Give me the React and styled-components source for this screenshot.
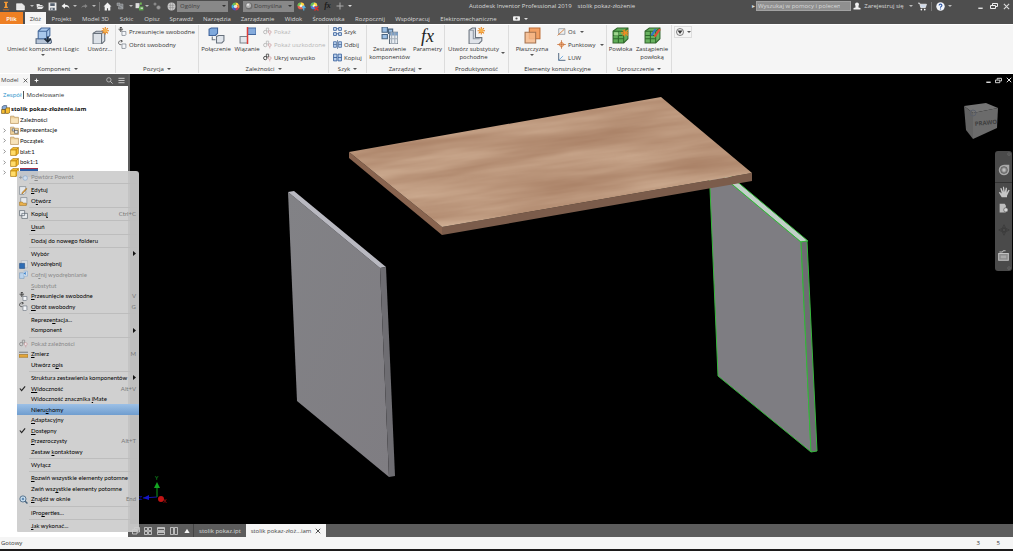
import React from 'react';
import styled, { createGlobalStyle, css } from 'styled-components';

const Global = createGlobalStyle`
  *, *::before, *::after { box-sizing: border-box; }
  html, body, #root { height: 100%; }
  body { margin: 0; background: #000; overflow: hidden; }
  button, input, select { font: inherit; color: inherit; margin: 0; padding: 0; border: 0; background: none; border-radius: 0; }
  svg { display: block; flex: none; }
`;

const uiFont = '"Open Sans", "Noto Sans", sans-serif';
const menuFont = 'Lato, "Liberation Sans", sans-serif';

/* ---------- icons ---------- */

const art = {
  logo: <><path d="M5 1h6v2H9.500v6H11v2H5V9h1.500V3H5z" fill="#f59a35" /><path d="M3 13h10v2H3z" fill="#a9662a" /></>,
  fresh: <path d="M1 3h10l4 4v7H1z" fill="#e8e8e8" stroke="#fff" />,
  open: <path d="M1 4h6l1 2h5v2H5l-3 5zM5 9h11l-4 5H2z" fill="#e6e6e6" />,
  save: <><path d="M1 1h14v14H1z" fill="#ececec" /><path d="M4 2h8v5H4zM4 10h8v5H4z" fill="#55606e" /><path d="M6 11h2v3H6z" fill="#fff" /></>,
  undo: <path d="M7 2 1 7l6 5V9c4-1 6 0 8 3 0-5-3-7-8-7z" fill="#f2f2f2" />,
  redo: <path d="m9 2 6 5-6 5V9c-4-1-6 0-8 3 0-5 3-7 8-7z" fill="#858585" />,
  home: <path d="M8 1 1 8h2v7h4v-4h2v4h4V8h2z" fill="#f0f0f0" />,
  sheet: <><path d="M2 2h6v5H2zM9 4h5v10H5V9" fill="#7e8286" stroke="#b5b5b5" /><path d="m9 8 4 4" stroke="#ddd" /></>,
  update: <><path d="M1 2h7v9H1z" fill="#dedede" /><path d="M7 8h8v7H7z" fill="#5ea94e" /><path d="M9 1h3v4H9z" fill="#73bf56" /><path d="M10 10h4v2h-4z" fill="#eee" /></>,
  link: <><circle cx="4" cy="4" r="3" fill="#888" /><circle cx="11" cy="11" r="4" fill="#999" stroke="#666" /></>,
  ball: <><circle cx="8" cy="8" r="7" fill="#c9c9c9" /><path d="M3 6h10M3 10h10M6 2v12M10 2v12" stroke="#8d8d8d" /></>,
  sphere: <><circle cx="8" cy="8" r="7" fill="#6f6f6f" /><circle cx="7" cy="7" r="5" fill="#b5b5b5" /><circle cx="6" cy="5.500" r="2" fill="#eee" /></>,
  wheel: <><path d="M8 8V1a7 7 0 0 1 6 3.500z" fill="#ffd83e" /><path d="m8 8 6-3.500a7 7 0 0 1 0 7z" fill="#f2883c" /><path d="m8 8 6 3.500A7 7 0 0 1 8 15z" fill="#cf3b58" /><path d="M8 8v7a7 7 0 0 1-6-3.500z" fill="#4557c9" /><path d="m8 8-6 3.500a7 7 0 0 1 0-7z" fill="#3daee0" /><path d="M8 8 2 4.500A7 7 0 0 1 8 1z" fill="#6ac254" /><circle cx="8" cy="8" r="3" fill="#fff" opacity=".75" /></>,
  wheelUp: <><circle cx="7" cy="7" r="6" fill="#e5604a" /><path d="M1 7a6 6 0 0 1 6-6v6z" fill="#6ac254" /><path d="M7 1a6 6 0 0 1 6 6H7z" fill="#ffd83e" /><circle cx="7" cy="7" r="2.500" fill="#fff" opacity=".8" /><path d="M12 7v8M9 11l3-4 3 4" fill="none" stroke="#55b7ee" strokeWidth="2" /></>,
  wheelOff: <><circle cx="7" cy="7" r="6" fill="#4d7fd2" /><path d="M1 7a6 6 0 0 1 6-6v6z" fill="#6ac254" /><path d="M7 1a6 6 0 0 1 6 6H7z" fill="#ffd83e" /><circle cx="7" cy="7" r="2.500" fill="#fff" opacity=".8" /><path d="m8 8 7 7M15 8l-7 7" stroke="#e02f2f" strokeWidth="2.500" /></>,
  plus: <path d="M8 1v14M1 8h14" stroke="#aaa" strokeWidth="2" />,
  user: <><circle cx="8" cy="5" r="4" fill="#f0f0f0" /><path d="M5 8h6v3l4 1v3H1v-3l4-1z" fill="#f0f0f0" /></>,
  cart: <><path d="M0 2h3l2 8h8l2-6H4" fill="#cdd9ea" stroke="#e8e8e8" strokeWidth="1.500" /><circle cx="6" cy="13.500" r="1.500" fill="#fff" /><circle cx="12" cy="13.500" r="1.500" fill="#fff" /></>,
  help: <><circle cx="8" cy="8" r="7.500" fill="#f4f7fc" /><path d="M5.500 6C5.500 3 10.500 3 10.500 6c0 2-2.500 2-2.500 4M8 11.500v2" fill="none" stroke="#3159a5" strokeWidth="2" /></>,
  minimize: <path d="M3 12h10" stroke="#eee" strokeWidth="3" />,
  restore: <path d="M5 6V3h10v6h-3M1 7h10v6H1z" fill="none" stroke="#eee" strokeWidth="2" />,
  close: <path d="m2 2 12 12M14 2 2 14" stroke="currentColor" strokeWidth="2.500" />,
  addBar: <path d="M8 2v12M2 8h12" stroke="#fff" strokeWidth="3" />,
  search: <><circle cx="6.500" cy="6.500" r="5" fill="none" stroke="#d0d0d0" strokeWidth="1.600" /><path d="m10 10 5 5" stroke="#d0d0d0" strokeWidth="2" /></>,
  lines: <path d="M1 3h14M1 8h14M1 13h14" stroke="#e4e4e4" strokeWidth="1.800" />,
  twist: <path d="m5 2 6 6-6 6" fill="none" stroke="#777" strokeWidth="2.500" />,
  place: <><path d="M1 11h13l2 3-2 2H1z" fill="#b7c5d8" stroke="#53657c" /><path d="M3 4l3-3h8v7l-3 3H3z" fill="#a9c8ec" stroke="#46699b" /><path d="M3 4h8v7M11 4l3-3" fill="none" stroke="#46699b" /><path d="M12 9v5m-3-3 3 3 3-3" fill="none" stroke="#1f2c3c" strokeWidth="1.600" /></>,
  create: <><path d="M1 6l3-2h8v9l-3 3H1z" fill="#dde2e8" stroke="#69727c" /><path d="M1 6h8v10M9 6l3-2" fill="none" stroke="#69727c" /><path d="M12.500 0v7M9 3.500h7M10 1l5 5M15 1l-5 5" stroke="#e5801c" /><circle cx="12.500" cy="3.500" r="2" fill="#f7b24e" /></>,
  move: <><path d="M5 0v8M1 4h8M3 2l2-2 2 2M3 6l2 2 2-2" fill="none" stroke="#333" strokeWidth="1.400" /><path d="M7 8h7v6l-1 1H7z" fill="#f5f7fa" stroke="#56616d" /></>,
  rotate: <><path d="M7 2C3 0 1 3 1 5s2 4 5 3M5 0l3 2-3 2" fill="none" stroke="#333" strokeWidth="1.300" /><path d="M7 7h7v7l-1 1H7z" fill="#f5f7fa" stroke="#56616d" /></>,
  joint: <><path d="M1 2l2-1h6v5L7 8H1z" fill="#7ea8dc" stroke="#3e639b" /><path d="M8 9l2-1h5v5l-2 2H8z" fill="#e1e6ec" stroke="#67717c" /><path d="M4 9v3h3" fill="none" stroke="#68737f" strokeWidth="1" /></>,
  constrain: <><path d="M8 1h8v6H8z" fill="#85abdc" stroke="#42689f" /><path d="M1 9h7v6H1z" fill="#e3e7ec" stroke="#7b838c" /><path d="M8 0v16" stroke="#df3c36" strokeWidth="1.400" /></>,
  relation: <><circle cx="4" cy="9" r="3" fill="none" stroke="currentColor" strokeWidth="1.500" /><path d="M6 2h4v5H6z" fill="none" stroke="currentColor" strokeWidth="1.300" /><circle cx="12" cy="9" r="2.500" fill="#eee" stroke="#c78b91" /><path d="M12 12v3" stroke="#c78b91" /></>,
  pattern: <g fill="#d7e5f5" stroke="#365f9b" strokeWidth="1.500"><path d="M1 1h5v5H1zM10 1h5v5h-5zM1 10h5v5H1zM10 10h5v5h-5z" /><path d="M6 3h4M6 12h4" /></g>,
  mirror: <><path d="M1 3h5v10H1zM10 3h5v10h-5z" fill="#bdd3ef" stroke="#365f9b" strokeWidth="1.300" /><path d="M8 0v16M1 8h5M10 8h5" stroke="#244878" /></>,
  copy: <path d="M1 2h6v12H1zM9 2h6v12H9zM1 8h6M9 8h6" fill="#bdd3ef" stroke="#365f9b" strokeWidth="1.500" />,
  bom: <><path d="M1 0h5v5H1zM1 7h5v4H1zM7 2h4v4H7z" fill="#9dc0e5" stroke="#4a6581" /><path d="M8 5h8v11H8z" fill="#e8edf2" stroke="#5f6d7b" /><path d="M8 5h8v3H8z" fill="#7d9fc4" /><path d="M10 5v11M13 5v11M8 11h8" stroke="#a3aeb9" /></>,
  substitute: <><path d="M1 3l3-2h3v9h6v3l-3 3H1z" fill="#dfe3e9" stroke="#69727c" /><path d="M1 3h4v8h6" fill="none" stroke="#8f98a2" /><path d="M12.500 0v7M9 3.500h7M10 1l5 5M15 1l-5 5" stroke="#e5801c" /><circle cx="12.500" cy="3.500" r="2" fill="#f7b24e" /></>,
  plane: <><path d="M5 1h10v10H5z" fill="#f2a064" stroke="#bd6a32" /><path d="M1 5h10v10H1z" fill="#f6b98a" fillOpacity=".85" stroke="#a3714e" /></>,
  axis: <><path d="M3 3h11v10H3z" fill="#eef0f2" stroke="#69727c" /><path d="M1 15 13 4" stroke="#d9772c" strokeWidth="1.500" /></>,
  point: <><path d="m8 2 6 6-6 6-6-6z" fill="#e59a64" /><path d="m8 5 3 3-3 3-3-3z" fill="#f8d2b2" /><path d="M8 0v16M0 8h16" stroke="#b9622c" /></>,
  ucs: <><path d="M3 0v13h12" fill="none" stroke="#39536f" strokeWidth="1.500" /><path d="m3 13 8-8" stroke="#3a8ad4" strokeWidth="1.500" strokeDasharray="2 1" /></>,
  shrink: <><path d="M1 4l4-3h10v10l-4 4H1z" fill="#5fae58" stroke="#34672f" /><path d="M1 4h10v11M11 4l4-3M1 8h10M6 4v11M1 11h10" fill="none" stroke="#2d6a2a" /><path d="M2 5h4v3H2z" fill="#a0d68f" /><path d="M12 2v7M8.500 5.500h7M10 3l5 5M15 3l-5 5" stroke="#ef8c22" /></>,
  replace: <><path d="M1 4l4-3h10v10l-4 4H1z" fill="#68b25f" stroke="#34672f" /><path d="M1 4h10v11M11 4l4-3M1 8h10M6 4v11M1 11h10" fill="none" stroke="#2d6a2a" /><path d="m7 8 4-6" stroke="#3475c6" strokeWidth="2" /><path d="m10 9 5-7" stroke="#e24c35" strokeWidth="2" /></>,
  show: <><circle cx="8" cy="8" r="7" fill="#f3f3f3" stroke="#555" strokeWidth="1.500" /><path d="M3 5h10l-5 7z" fill="#333" /></>,
  folder: <><path d="M1 2h6l1 2h7v11H1z" fill="#edcf98" stroke="#a98145" /><path d="M2 6h12v8H2z" fill="#f7e3ba" /></>,
  views: <><path d="M1 2h6l1 2h7v11H1z" fill="#edcf98" stroke="#a98145" /><path d="M4 5h4v4H4zM8 8h6v5H8z" fill="#e8ecf0" stroke="#3c434b" /></>,
  part: <><path d="m1 5 4-4h10v10l-4 4H1z" fill="#f9bf2a" stroke="#9a6a07" /><path d="M2 6h8v8H2z" fill="#ffdc6a" /><path d="M1 5h10v10M11 5l4-4" fill="none" stroke="#9a6a07" /></>,
  assembly: <><path d="M2 3l3-2h5v5L8 8H2z" fill="#87abda" stroke="#253a56" /><path d="M1 8h6v7H1zM8 7l2-2h6v8l-3 2H8z" fill="#f6bd33" stroke="#573d0b" /></>,
  mRepeat: <><path d="M0 8h6M3 5v6" stroke="#8f979f" strokeWidth="1.500" /><circle cx="11" cy="9" r="4" fill="#cfdcea" stroke="#7ba0cc" /></>,
  mEdit: <><path d="M1 1h11v11l-3 3H1z" fill="#e6e9ed" stroke="#69727c" /><path d="m14 5-7 8-2 1 1-3 7-7z" fill="#e8a33c" stroke="#9a6518" /></>,
  mOpen: <><path d="M3 1h11v12H3z" fill="#e6e9ed" stroke="#69727c" /><path d="M1 9h5l1 2h6v4H1z" fill="#ecb34e" stroke="#a1701c" /></>,
  mCopy: <path d="M1 1h9v9H1zM5 6h10v9H5z" fill="#eceff2" stroke="#57616c" strokeWidth="1.200" />,
  mIsolate: <><path d="M4 1h11v13H4z" fill="#d9dde2" stroke="#a8afb7" /><path d="M1 6h9v9H1z" fill="#2e6db5" stroke="#1d4a80" /></>,
  mUndo: <><path d="M1 5h8v10H1z" fill="#b9d2ec" stroke="#7597bc" /><path d="M8 2h7v9H9" fill="#d7e1ec" stroke="#7fa5cf" /><path d="m8 6 4-3v6z" fill="#3b82cc" /></>,
  mMeasure: <><path d="M0 4h16" stroke="#7f8489" strokeWidth="2" /><path d="M0 8h16v5H0z" fill="#e5a83a" stroke="#94671b" /></>,
  mCheck: <path d="m2 8 4 5L14 3" fill="none" stroke="#222" strokeWidth="2.600" />,
  mFind: <><circle cx="7" cy="7" r="5.500" fill="#c9dff0" stroke="#45617c" strokeWidth="1.500" /><path d="m11 11 4 4" stroke="#45617c" strokeWidth="2.500" /><path d="M5 5h4v4H5z" fill="#648db5" /></>,
  tCascade: <path d="M1 5h9v9H1zM5 5V1h10v9h-5" fill="none" stroke="#ddd" strokeWidth="1.500" />,
  tGrid: <path d="M1 1h6v6H1zM9 1h6v6H9zM1 9h6v6H1zM9 9h6v6H9z" fill="none" stroke="#ddd" strokeWidth="1.500" />,
  tRows: <path d="M1 1h14v6H1zM1 9h14v6H1zM1 3h14M1 11h14" fill="none" stroke="#ddd" strokeWidth="1.500" />,
  tCols: <path d="M1 1h6v14H1zM9 1h6v14H9z" fill="none" stroke="#ddd" strokeWidth="1.500" />,
  tUp: <path d="m8 2 7 11H1z" fill="#f4f4f4" />,
  navWheel: <><path d="M8 1h7v7a7 7 0 1 1-7-7z" fill="#a9a9a9" /><circle cx="8" cy="8" r="4.500" fill="#8b8b8b" stroke="#555" /><circle cx="8" cy="8" r="2.200" fill="#bdbdbd" /></>,
  navPan: <path d="M5 15 1 8.500 2.500 8 5 10 3 3l1.500-.5L7 8 6.500 1H8l1 7 1.500-6 1.500.500L11.500 9 14 5l1.500.500L12 13v2z" fill="#c6c6c6" />,
  navZoom: <><path d="M1 1h8l2 3v11H1z" fill="#bdbdbd" /><circle cx="11" cy="11" r="3.500" fill="#d5d5d5" stroke="#4b4b4b" /></>,
  navOrbit: <path d="M8 1 6 5h4zM8 15l-2-4h4zM1 8l4-2v4zM15 8l-4-2v4zM6 6h4v4H6z" fill="none" stroke="#393939" />,
  navLook: <><path d="M1 5h14v10H1z" fill="#8c8c8c" stroke="#c2c2c2" strokeWidth="1.500" /><path d="M2 3h4l2-2h3" fill="none" stroke="#bdbdbd" strokeWidth="1.500" /><path d="M4 8h8v4H4z" fill="#a9a9a9" /></>,
  dot: <><circle cx="8" cy="8" r="6" fill="#777" /><path d="m5 5 6 6M11 5l-6 6" stroke="#222" strokeWidth="2" /></>,
  camera: <><rect x="0" y="3" width="16" height="10" rx="2" fill="#f0f0f0" /><circle cx="8" cy="8" r="2.500" fill="#555" /></>,
};

const Icon = ({ name, size = 8 }) => (
  <svg width={size} height={size} viewBox="0 0 16 16" aria-hidden="true">{art[name]}</svg>
);

const Caret = ({ color = '#555' }) => (
  <svg width="4" height="2" viewBox="0 0 4 2" aria-hidden="true"><path d="M0 0h4L2 2z" fill={color} /></svg>
);

/* ---------- title bar ---------- */

const Page = styled.div`
  position: relative;
  display: flex;
  flex-direction: column;
  height: 100%;
  background: #f5f5f5;
  color: #333;
  font: 6px/8px ${uiFont};
`;

const TitleBar = styled.header`
  display: flex;
  align-items: center;
  height: 12px;
  background: #4e4e4e;
  color: #dadada;
`;

const Tool = styled.button`
  display: flex;
  align-items: center;
  justify-content: center;
  width: ${p => p.$w}px;
  height: 12px;
  white-space: nowrap;
  ${p => p.$serif && css`font: italic bold 8px/12px "Liberation Serif", serif; color: #1a1a1a;`}
`;

const Divider = styled.span`
  width: 1px;
  height: 9px;
  margin: 0 3px;
  background: #777;
`;

const Picker = styled.label`
  display: flex;
  align-items: center;
  width: 51px;
  height: 11px;
  padding: 0 2px;
  background: #888;
  color: #3f3f3f;
`;

const Select = styled.select`
  flex: 1;
  min-width: 0;
  appearance: none;
  height: 10px;
  padding-left: 1px;
  outline: 0;
`;

const Title = styled.h1`
  display: flex;
  flex: 1;
  justify-content: center;
  gap: 6px;
  margin: 0;
  font-size: 6px;
  font-weight: 400;
  white-space: nowrap;
`;

const Search = styled.input`
  width: 95px;
  height: 10px;
  padding: 0 1px;
  border: 1px solid #a2a2a2;
  background: #8f8f8f;
  &::placeholder { color: #d8d8d8; opacity: 1; }
`;

const WindowButtons = styled.div`
  display: flex;
  margin-left: 20px;
`;

const quickTools = [
  ['logo', 11, 10, 'Menu programu'], ['fresh', 19, 9, 'Nowy'], ['caret', 4, 0, 'Szablony'], ['open', 12, 8, 'Otwórz'],
  ['save', 13, 9, 'Zapisz'], ['undo', 13, 9, 'Cofnij'], ['caret', 6, 0, 'Historia cofania'], ['redo', 13, 7, 'Ponów'],
  ['caret', 5, 0, 'Historia ponowień'], null, ['home', 9, 9, 'Strona główna'], ['sheet', 16, 8, 'Arkusz'],
  ['caret', 5, 0, 'Opcje arkusza'], ['update', 12, 9, 'Aktualizuj'], ['caret', 4, 0, 'Opcje aktualizacji'],
  ['link', 16, 8, 'Łącza'], ['ball', 12, 9, 'Materiał'],
];

function AppBar() {
  return (
    <TitleBar>
      {quickTools.map((t, i) => t
        ? <Tool key={i} $w={t[1]} aria-label={t[3]}>{t[0] === 'caret' ? <Caret color="#bbb" /> : <Icon name={t[0]} size={t[2]} />}</Tool>
        : <Divider key={i} />)}
      <Picker><Select aria-label="Materiał"><option>Ogólny</option></Select><Caret color="#333" /></Picker>
      <Tool $w={15} aria-label="Kolory"><Icon name="wheel" size={9} /></Tool>
      <Picker><Icon name="sphere" /><Select aria-label="Wygląd"><option>Domyślna</option></Select><Caret color="#333" /></Picker>
      <Tool $w={14} aria-label="Dopasuj"><Icon name="wheelUp" size={9} /></Tool>
      <Tool $w={13} aria-label="Wyczyść"><Icon name="wheelOff" size={9} /></Tool>
      <Tool $w={13} $serif aria-label="Parametry">fx</Tool>
      <Tool $w={12} aria-label="Dodaj"><Icon name="plus" /></Tool>
      <Tool $w={8} aria-label="Dostosuj"><Caret color="#ddd" /></Tool>
      <Title><span>Autodesk Inventor Professional 2019</span><span>stolik pokaz-złożenie</span></Title>
      <Tool $w={6} aria-label="Zwiń wyszukiwanie">▸</Tool>
      <Search type="search" aria-label="Wyszukaj" placeholder="Wyszukaj w pomocy i polecenia" />
      <Tool $w={12} aria-label="Konto"><Icon name="user" /></Tool>
      <Tool $w={42}>Zarejestruj się</Tool>
      <Tool $w={12} aria-label="Opcje konta"><Caret color="#bbb" /></Tool>
      <Tool $w={11} aria-label="Sklep"><Icon name="cart" size={9} /></Tool>
      <Divider />
      <Tool $w={11} aria-label="Pomoc"><Icon name="help" size={9} /></Tool>
      <Tool $w={8} aria-label="Opcje pomocy"><Caret color="#bbb" /></Tool>
      <WindowButtons>
        <Tool $w={13} aria-label="Minimalizuj"><Icon name="minimize" size={7} /></Tool>
        <Tool $w={13} aria-label="Przywróć"><Icon name="restore" size={8} /></Tool>
        <Tool $w={13} aria-label="Zamknij"><Icon name="close" size={7} /></Tool>
      </WindowButtons>
    </TitleBar>
  );
}

/* ---------- ribbon ---------- */

const RibbonTabs = styled.nav`
  display: flex;
  height: 12px;
  background: #4e4e4e;
`;

const RibbonTab = styled.button`
  display: flex;
  align-items: center;
  justify-content: center;
  gap: 4px;
  width: ${p => p.$w}px;
  height: 12px;
  padding-top: 1px;
  white-space: nowrap;
  color: #d8d8d8;
  ${p => p.$kind === 'file' && css`margin-right: 2px; background: #ee8024; color: #fff; font-weight: 600;`}
  ${p => p.$kind === 'active' && css`background: #f5f5f5; color: #444;`}
`;

const tabs = [
  ['Plik', 23, 'file'], ['Złóż', 21, 'active'], ['Projekt', 31], ['Model 3D', 37], ['Szkic', 25], ['Opisz', 26],
  ['Sprawdź', 33], ['Narzędzia', 38], ['Zarządzanie', 43], ['Widok', 29], ['Środowiska', 41], ['Rozpocznij', 42],
  ['Współpracuj', 43], ['Elektromechaniczne', 69],
];

const RibbonBody = styled.section`
  display: flex;
  height: 50px;
  border-top: 1px solid #fff;
  border-bottom: 1px solid #fff;
  background: #f5f5f5;
`;

const Group = styled.div`
  display: flex;
  flex-direction: column;
  width: ${p => p.$w}px;
  border-right: 1px solid #dcdcdc;
`;

const GroupTools = styled.div`
  display: flex;
  flex: 1;
`;

const GroupLabel = styled.button`
  display: flex;
  align-items: center;
  justify-content: center;
  gap: 3px;
  height: 9px;
  white-space: nowrap;
`;

const BigButton = styled.button`
  display: flex;
  flex-direction: column;
  align-items: center;
  width: ${p => p.$w}px;
  padding-top: 2px;
  white-space: nowrap;
  text-align: center;
`;

const BigLabel = styled.span`
  display: flex;
  align-items: center;
  gap: 2px;
  margin: 1px 0;
`;

const Fx = styled.span`
  height: 17px;
  font: italic 18px/18px "Liberation Serif", serif;
  color: #222;
`;

const SmallList = styled.div`
  display: flex;
  flex-direction: column;
  padding-left: ${p => p.$pad}px;
`;

const SmallButton = styled.button`
  display: flex;
  align-items: center;
  gap: 2px;
  height: 13px;
  white-space: nowrap;
  color: ${p => (p.$off ? '#b5b5b5' : '#333')};
`;

const CaretSlot = styled.span`
  padding-left: 2px;
`;

const FoldButton = styled.button`
  display: flex;
  align-items: center;
  justify-content: center;
  gap: 3px;
  width: 18px;
  height: 12px;
  margin: 1px 2px;
  border: 1px solid #ddd;
`;

const Big = ({ icon, w, lines, below, side }) => (
  <BigButton $w={w}>
    {icon === 'fx' ? <Fx>fx</Fx> : <Icon name={icon} size={17} />}
    <BigLabel>
      <span>{lines.map((l, i) => <React.Fragment key={l}>{i > 0 && <br />}{l}</React.Fragment>)}</span>
      {side && <Caret />}
    </BigLabel>
    {below && <Caret />}
  </BigButton>
);

const Small = ({ icon, children, off, caret }) => (
  <SmallButton $off={off} disabled={off}><Icon name={icon} size={9} />{children}{caret && <CaretSlot><Caret /></CaretSlot>}</SmallButton>
);

const RibbonGroup = ({ w, label, caret, children }) => (
  <Group $w={w}>
    <GroupTools>{children}</GroupTools>
    <GroupLabel>{label}{caret && <Caret />}</GroupLabel>
  </Group>
);

function Ribbon() {
  return (
    <>
      <RibbonTabs>
        {tabs.map(([name, w, kind]) => <RibbonTab key={name} $w={w} $kind={kind}>{name}</RibbonTab>)}
        <RibbonTab $w={34} aria-label="Nagrywanie"><Icon name="camera" size={7} /><Caret color="#ddd" /></RibbonTab>
      </RibbonTabs>
      <RibbonBody>
        <RibbonGroup w={116} label="Komponent" caret>
          <Big icon="place" w={86} lines={['Umieść komponent iLogic']} below />
          <Big icon="create" w={28} lines={['Utwórz...']} />
        </RibbonGroup>
        <RibbonGroup w={83} label="Pozycja" caret>
          <SmallList $pad={2}>
            <Small icon="move">Przesunięcie swobodne</Small>
            <Small icon="rotate">Obrót swobodny</Small>
          </SmallList>
        </RibbonGroup>
        <RibbonGroup w={130} label="Zależności" caret>
          <Big icon="joint" w={34} lines={['Połączenie']} />
          <Big icon="constrain" w={28} lines={['Wiązanie']} />
          <SmallList $pad={2}>
            <Small icon="relation" off>Pokaż</Small>
            <Small icon="relation" off>Pokaż uszkodzone</Small>
            <Small icon="relation">Ukryj wszystko</Small>
          </SmallList>
        </RibbonGroup>
        <RibbonGroup w={38} label="Szyk" caret>
          <SmallList $pad={4}>
            <Small icon="pattern">Szyk</Small>
            <Small icon="mirror">Odbij</Small>
            <Small icon="copy">Kopiuj</Small>
          </SmallList>
        </RibbonGroup>
        <RibbonGroup w={78} label="Zarządzaj" caret>
          <Big icon="bom" w={45} lines={['Zestawienie', 'komponentów']} />
          <Big icon="fx" w={31} lines={['Parametry']} />
        </RibbonGroup>
        <RibbonGroup w={64} label="Produktywność">
          <Big icon="substitute" w={63} lines={['Utwórz substytuty', 'pochodne']} side />
        </RibbonGroup>
        <RibbonGroup w={98} label="Elementy konstrukcyjne">
          <Big icon="plane" w={46} lines={['Płaszczyzna']} below />
          <SmallList $pad={2}>
            <Small icon="axis" caret>Oś</Small>
            <Small icon="point" caret>Punktowy</Small>
            <Small icon="ucs">LUW</Small>
          </SmallList>
        </RibbonGroup>
        <RibbonGroup w={65} label="Uproszczenie" caret>
          <Big icon="shrink" w={27} lines={['Powłoka']} />
          <Big icon="replace" w={36} lines={['Zastąpienie', 'powłoką']} />
        </RibbonGroup>
        <FoldButton aria-label="Panele wstążki"><Icon name="show" /><Caret /></FoldButton>
      </RibbonBody>
    </>
  );
}

/* ---------- model browser ---------- */

const Workspace = styled.main`
  display: flex;
  flex: 1;
  min-height: 0;
`;

const Browser = styled.aside`
  display: flex;
  flex-direction: column;
  width: 130px;
  border-right: 2px solid #5c5c5c;
  background: #fff;
`;

const BrowserTabs = styled.div`
  display: flex;
  align-items: center;
  height: 12px;
  background: #555;
`;

const BrowserTab = styled.button`
  display: flex;
  align-items: center;
  gap: 4px;
  width: 30px;
  height: 12px;
  padding-left: 1px;
  background: #f5f5f5;
  color: #444;
`;

const Spacer = styled.span`
  flex: 1;
`;

const Modes = styled.div`
  display: flex;
  align-items: center;
  gap: 2px;
  height: 18px;
  padding-left: 3px;
`;

const ModeLink = styled.a`
  color: ${p => (p.$on ? '#1b8fc9' : '#333')};
  text-decoration: none;
  ${p => !p.$on && css`padding-left: 2px; border-left: 1px solid #555;`}
`;

const Tree = styled.ul`
  display: grid;
  grid-template-rows: repeat(7, 1fr);
  height: 74px;
  margin: 0;
  padding: 0;
  list-style: none;
  color: #111;
`;

const TreeRow = styled.li`
  display: flex;
  align-items: center;
  gap: 1px;
  padding-left: ${p => (p.$root ? 1 : 2)}px;
  white-space: nowrap;
  ${p => (p.$root ? css`font-weight: 700;` : css`font-family: ${menuFont};`)}
`;

const Twist = styled.span`
  width: 7px;
`;

const Picked = styled.span`
  width: 18px;
  height: 9px;
  border-top: 1px solid #a03048;
  background: #2c5fa8;
`;

const tree = [[false, 'folder', 'Zależności'], [true, 'views', 'Reprezentacje'], [true, 'folder', 'Początek'], [true, 'part', 'blat:1'], [true, 'part', 'bok1:1']];

function ModelBrowser() {
  return (
    <Browser>
      <BrowserTabs>
        <BrowserTab>Model<Icon name="close" size={5} /></BrowserTab>
        <Tool $w={12} aria-label="Dodaj panel"><Icon name="addBar" size={5} /></Tool>
        <Spacer />
        <Tool $w={12} aria-label="Szukaj"><Icon name="search" size={7} /></Tool>
        <Tool $w={13} aria-label="Menu przeglądarki"><Icon name="lines" size={7} /></Tool>
      </BrowserTabs>
      <Modes><ModeLink href="#zespol" $on>Zespół</ModeLink><ModeLink href="#modelowanie">Modelowanie</ModeLink></Modes>
      <Tree>
        <TreeRow $root><Icon name="assembly" size={9} />stolik pokaz-złożenie.iam</TreeRow>
        {tree.map(([twist, icon, name]) => <TreeRow key={name}><Twist>{twist && <Icon name="twist" size={5} />}</Twist><Icon name={icon} size={9} />{name}</TreeRow>)}
        <TreeRow><Twist><Icon name="twist" size={5} /></Twist><Icon name="part" size={9} /><Picked /></TreeRow>
      </Tree>
    </Browser>
  );
}

/* ---------- context menu ---------- */

const Menu = styled.div`
  position: absolute;
  top: 171px;
  left: 17px;
  z-index: 2;
  display: flex;
  flex-direction: column;
  width: 122px;
  height: 361px;
  padding: 1px 0;
  border-radius: 1px 3px 3px 1px;
  background: rgba(204, 204, 204, 0.93);
  font-family: ${menuFont};
`;

const MenuItem = styled.button`
  display: flex;
  flex: 4 1 0;
  align-items: center;
  min-height: 0;
  padding: 0 3px 0 2px;
  text-align: left;
  white-space: nowrap;
  color: ${p => (p.$off ? '#8a8a8a' : '#000')};
  ${p => p.$hot && css`background: linear-gradient(#9cc0e6, #6f9dcf);`}
`;

const MenuIcon = styled.span`
  flex: none;
  width: 12px;
`;

const MenuText = styled.span`
  flex: 1;
`;

const Shortcut = styled.kbd`
  font: inherit;
  color: #777;
`;

const Rule = styled.hr`
  flex: 1 1 0;
  min-height: 0;
  margin: 0 2px 0 12px;
  border: 0;
  background: linear-gradient(#bdbdbd, #bdbdbd) center / 100% 1px no-repeat;
`;

const item = (text, key, opts = {}) => ({ text, key, ...opts });
const menuSections = [
  [item('Powtórz Powrót', 1, { icon: 'mRepeat', off: true })],
  [item('Edytuj', 0, { icon: 'mEdit' }), item('Otwórz', 1, { icon: 'mOpen' })],
  [item('Kopiuj', 5, { icon: 'mCopy', hint: 'Ctrl+C' })],
  [item('Usuń', 0)],
  [item('Dodaj do nowego folderu')],
  [item('Wybór', -1, { sub: true }), item('Wyodrębnij', -1, { icon: 'mIsolate' }), item('Cofnij wyodrębnianie', 2, { icon: 'mUndo', off: true }),
    item('Substytut', 0, { off: true }), item('Przesunięcie swobodne', 0, { icon: 'move', hint: 'V' }), item('Obrót swobodny', 0, { icon: 'rotate', hint: 'G' })],
  [item('Reprezentacja...', 7), item('Komponent', -1, { sub: true })],
  [item('Pokaż zależności', -1, { icon: 'relation', off: true }), item('Zmierz', 0, { icon: 'mMeasure', hint: 'M' }), item('Utwórz opis', 8)],
  [item('Struktura zestawienia komponentów', -1, { sub: true }), item('Widoczność', 0, { icon: 'mCheck', hint: 'Alt+V' }),
    item('Widoczność znacznika iMate', 21), item('Nieruchomy', 5, { hot: true }), item('Adaptacyjny', 0), item('Dostępny', 0, { icon: 'mCheck' }),
    item('Przezroczysty', 0, { hint: 'Alt+T' }), item('Zestaw kontaktowy', 7)],
  [item('Wyłącz', -1)],
  [item('Rozwiń wszystkie elementy potomne', 0), item('Zwiń wszystkie elementy potomne', 8), item('Znajdź w oknie', 0, { icon: 'mFind', hint: 'End' })],
  [item('iProperties...', 4)],
  [item('Jak wykonać...', 0)],
];

const Mnemonic = ({ text, at = -1 }) => (at < 0 ? text : <>{text.slice(0, at)}<u>{text[at]}</u>{text.slice(at + 1)}</>);

function ContextMenu() {
  return (
    <Menu role="menu">
      {menuSections.map((section, s) => (
        <React.Fragment key={s}>
          {s > 0 && <Rule />}
          {section.map(m => (
            <MenuItem key={m.text} role="menuitem" $off={m.off} $hot={m.hot} disabled={m.off}>
              <MenuIcon>{m.icon && <Icon name={m.icon} size={m.icon === 'mCheck' ? 7 : 9} />}</MenuIcon>
              <MenuText><Mnemonic text={m.text} at={m.key} /></MenuText>
              {m.hint && <Shortcut>{m.hint}</Shortcut>}
              {m.sub && <svg width="3" height="5" viewBox="0 0 3 5" aria-hidden="true"><path d="M0 0v5l3-2.500z" fill="#111" /></svg>}
            </MenuItem>
          ))}
        </React.Fragment>
      ))}
    </Menu>
  );
}

/* ---------- viewport ---------- */

const Stage = styled.section`
  display: flex;
  flex: 1;
  flex-direction: column;
  min-width: 0;
`;

const Canvas = styled.div`
  position: relative;
  flex: 1;
  min-height: 0;
  background: #000;
`;

const Scene = styled.svg`
  width: 100%;
  height: 100%;
`;

const ViewControls = styled.div`
  position: absolute;
  top: 0;
  right: 0;
  display: flex;
  color: #eee;
`;

const NavBar = styled.div`
  position: absolute;
  top: 77px;
  right: 1px;
  display: flex;
  flex-direction: column;
  align-items: center;
  justify-content: space-between;
  width: 17px;
  height: 120px;
  padding: 1px 0;
  border-radius: 3px;
  background: #4a4a4a;
`;

const NavButton = styled.button`
  display: flex;
  align-items: center;
  justify-content: center;
  width: 17px;
  height: ${p => p.$h}px;
  ${p => p.$ruled && css`border-bottom: 1px solid #333;`}
`;

const NavEnd = styled.span`
  align-self: flex-end;
  margin-right: 1px;
`;

function Model() {
  return (
    <Scene viewBox="130 74 883 450" preserveAspectRatio="xMidYMid meet" role="img" aria-label="Model stolika">
      <defs>
        <clipPath id="board"><path d="M349 152 661 97l91 76-310 54z" /></clipPath>
        <filter id="grain" x="0" y="0" width="100%" height="100%" colorInterpolationFilters="sRGB">
          <feTurbulence type="fractalNoise" baseFrequency="0.006 0.065" numOctaves="4" seed="8" />
          <feColorMatrix values="0.2 0 0 0 0.63  0.24 0 0 0 0.465  0.24 0 0 0 0.36  0 0 0 0 1" />
        </filter>
        <linearGradient id="side" x1="0" y1="0" x2="1" y2="1"><stop offset="0" stopColor="#828286" /><stop offset="1" stopColor="#7f7d82" /></linearGradient>
      </defs>
      <path d="m288 192 92 76 9 209-92-76z" fill="url(#side)" />
      <path d="m288 192 6-1 92 76-6 1z" fill="#b9b9c1" />
      <path d="m380 268 6-1 9 209-6 1z" fill="#6e6d72" />
      <g stroke="#35b83b" strokeWidth="1">
        <path d="m709 165 92 77 10 210-93-76z" fill="#7e7d82" />
        <path d="m709 165 7-1 92 77-7 1z" fill="#c2d0c9" />
        <path d="m801 242 6-1 10 210-6 1z" fill="#6d6c72" />
      </g>
      <path d="m349 152 93 75v8l-93-77z" fill="#89644f" />
      <path d="m442 227 310-54v8l-310 54z" fill="#7b5c4b" />
      <g clipPath="url(#board)">
        <g transform="rotate(-7 349 152)"><rect x="330" y="80" width="460" height="230" filter="url(#grain)" /></g>
      </g>
      <g>
        <path d="m964 106 22-3 12 5-25 5z" fill="#747474" />
        <path d="m964 106 9 7v26l-7-9z" fill="#626262" />
        <path d="m973 113 25-5-1 20-24 11z" fill="#6b6b6b" />
        <circle cx="973" cy="113" r="3" fill="none" stroke="#5a5f6a" />
        <text x="975" y="126" transform="rotate(-6 975 126)" fontFamily="Open Sans" fontSize="6" fontWeight="700" fill="#404040">PRAWO</text>
      </g>
      <path d="M157 497v-12" stroke="#0c9c1a" /><path d="m154 488 3-6 3 6z" fill="#14a522" />
      <path d="m157 497-14 1" stroke="#1414a8" /><path d="m149 495-6 3 6 2z" fill="#1414c8" />
      <circle cx="161" cy="499" r="3" fill="#c21414" />
      <text x="155" y="480" fontFamily="Open Sans" fontSize="6" fill="#14a522">Y</text>
      <text x="163" y="503" fontFamily="Open Sans" fontSize="6" fill="#c21414">X</text>
      <text x="139" y="500" fontFamily="Open Sans" fontSize="6" fill="#1414c8">Z</text>
    </Scene>
  );
}

const DocTabs = styled.div`
  display: flex;
  height: 13px;
  background: #5c5c5c;
  color: #ddd;
`;

const DocTool = styled.button`
  display: flex;
  align-items: center;
  justify-content: center;
  width: 13px;
  &:first-child { width: 11px; }
`;

const DocTab = styled.button`
  display: flex;
  align-items: center;
  justify-content: center;
  gap: 4px;
  width: ${p => p.$w}px;
  white-space: nowrap;
  border-left: 1px solid #444;
  ${p => p.$on && css`background: #f5f5f5; color: #444; border: 0;`}
`;

const StatusBar = styled.footer`
  display: flex;
  align-items: center;
  height: 14px;
  padding: 0 13px 0 1px;
  border-bottom: 2px solid #1c1a1a;
  background: #f5f5f5;
`;

const Count = styled.span`
  width: 20px;
  text-align: right;
`;

export default function App() {
  return (
    <Page>
      <Global />
      <AppBar />
      <Ribbon />
      <Workspace>
        <ModelBrowser />
        <Stage>
          <Canvas>
            <Model />
            <ViewControls>
              <Tool $w={10} aria-label="Minimalizuj widok"><Icon name="minimize" size={7} /></Tool>
              <Tool $w={11} aria-label="Przywróć widok"><Icon name="restore" size={7} /></Tool>
              <Tool $w={9} aria-label="Zamknij widok"><Icon name="close" size={6} /></Tool>
            </ViewControls>
            <NavBar>
              <NavEnd><Icon name="dot" size={4} /></NavEnd>
              <NavButton $h={26} $ruled aria-label="Koło nawigacji"><Icon name="navWheel" size={12} /></NavButton>
              <NavButton $h={16} aria-label="Nadanie"><Icon name="navPan" size={12} /></NavButton>
              <NavButton $h={14} aria-label="Zoom"><Icon name="navZoom" size={10} /></NavButton>
              <NavButton $h={28} aria-label="Orbita"><Icon name="navOrbit" size={12} /></NavButton>
              <NavButton $h={20} aria-label="Patrz na"><Icon name="navLook" size={11} /></NavButton>
              <NavEnd><Icon name="dot" size={4} /></NavEnd>
            </NavBar>
          </Canvas>
          <DocTabs>
            {[['tCascade', 'Kaskada'], ['tGrid', 'Siatka'], ['tRows', 'Poziomo'], ['tCols', 'Pionowo'], ['tUp', 'Lista okien']].map(([n, l]) => (
              <DocTool key={n} aria-label={l}><Icon name={n} size={n === 'tUp' ? 6 : 8} /></DocTool>
            ))}
            <DocTab $w={53}>stolik pokaz.ipt</DocTab>
            <DocTab $w={80} $on>stolik pokaz-złoż...iam<Icon name="close" size={6} /></DocTab>
          </DocTabs>
        </Stage>
      </Workspace>
      <StatusBar>Gotowy<Spacer /><Count>3</Count><Count>5</Count></StatusBar>
      <ContextMenu />
    </Page>
  );
}
